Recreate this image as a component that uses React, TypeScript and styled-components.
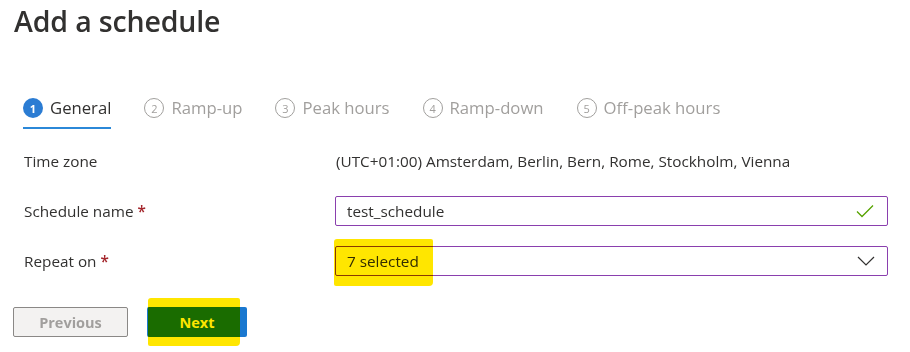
import React from "react";
import styled, { createGlobalStyle, css } from "styled-components";

const Global = createGlobalStyle`
  html, body { margin: 0; padding: 0; background: #ffffff; }
  body { font-family: "Open Sans", "Noto Sans", sans-serif; color: #323130; }
`;

const Page = styled.div`
  width: 910px;
  height: 352px;
  overflow: hidden;
  display: flex;
  flex-direction: column;
`;

const Title = styled.h1`
  margin: 0;
  padding: 0 0 0 14px;
  height: 44px;
  line-height: 42px;
  font-size: 28.5px;
  font-weight: 600;
  color: #323130;
  letter-spacing: -0.15px;
`;

const Tabs = styled.div`
  display: flex;
  align-items: flex-start;
  gap: 33px;
  margin: 50px 0 0 23px;
  height: 36px;
`;

const Tab = styled.div<{ $active?: boolean }>`
  display: flex;
  align-items: center;
  gap: 7px;
  padding: 4px 0 9px;
  border-bottom: 2px solid ${(p) => (p.$active ? "#2b88d8" : "transparent")};
`;

const Step = styled.span<{ $active?: boolean }>`
  width: 20px;
  height: 20px;
  box-sizing: border-box;
  border-radius: 50%;
  display: inline-flex;
  align-items: center;
  justify-content: center;
  font-size: 11px;
  ${(p) =>
    p.$active
      ? css`
          background: #2b7cd3;
          color: #ffffff;
          font-weight: 700;
        `
      : css`
          border: 1px solid #a19f9d;
          color: #a19f9d;
        `}
`;

const TabLabel = styled.span<{ $active?: boolean }>`
  font-size: 16.7px;
  line-height: 20px;
  color: ${(p) => (p.$active ? "#323130" : "#a19f9d")};
`;

const Form = styled.div`
  display: flex;
  flex-direction: column;
  margin-top: 6px;
`;

const Row = styled.div`
  display: grid;
  grid-template-columns: 311px 553px;
  align-items: center;
  height: 50px;
  padding-left: 24px;
`;

const Label = styled.div`
  font-size: 15.3px;
  color: #323130;
`;

const Req = styled.span`
  color: #a4262c;
  font-weight: 600;
`;

const Value = styled.div`
  font-size: 15.3px;
  color: #323130;
  padding-left: 1px;
`;

const Field = styled.div`
  position: relative;
  height: 30px;
  box-sizing: border-box;
  border: 1px solid #8a3fae;
  border-radius: 2px;
  display: flex;
  align-items: center;
  justify-content: space-between;
  padding: 0 12px 0 11px;
  font-size: 15.3px;
  color: #323130;
`;

const Highlight = styled.span<{ $l: number; $t: number; $w: number; $h: number }>`
  position: absolute;
  left: ${(p) => p.$l}px;
  top: ${(p) => p.$t}px;
  width: ${(p) => p.$w}px;
  height: ${(p) => p.$h}px;
  background: #ffe600;
  mix-blend-mode: multiply;
  border-radius: 3px 2px 4px 2px;
  pointer-events: none;
`;

const Footer = styled.div`
  display: flex;
  gap: 19px;
  margin: 21px 0 0 13px;
`;

const Button = styled.button`
  font-family: inherit;
  width: 115px;
  height: 30px;
  box-sizing: border-box;
  border: 1px solid #8a8886;
  border-radius: 2px;
  background: #f3f2f1;
  color: #a19f9d;
  font-size: 14.5px;
  font-weight: 700;
  padding: 0;
`;

const PrimaryWrap = styled.div`
  position: relative;
  width: 100px;
  height: 30px;
`;

const PrimaryButton = styled.button`
  font-family: inherit;
  width: 100px;
  height: 30px;
  border: none;
  border-radius: 2px;
  background: #1a78d0;
  color: #ffffff;
  font-size: 14.5px;
  font-weight: 700;
  padding: 0;
`;

const steps = ["General", "Ramp-up", "Peak hours", "Ramp-down", "Off-peak hours"];

export default function App() {
  return (
    <>
      <Global />
      <Page>
        <Title>Add a schedule</Title>
        <Tabs>
          {steps.map((s, i) => (
            <Tab key={s} $active={i === 0}>
              <Step $active={i === 0}>{i + 1}</Step>
              <TabLabel $active={i === 0}>{s}</TabLabel>
            </Tab>
          ))}
        </Tabs>
        <Form>
          <Row>
            <Label>Time zone</Label>
            <Value>(UTC+01:00) Amsterdam, Berlin, Bern, Rome, Stockholm, Vienna</Value>
          </Row>
          <Row>
            <Label>
              Schedule name <Req>*</Req>
            </Label>
            <Field>
              <span>test_schedule</span>
              <svg width="20" height="16" viewBox="0 0 20 16">
                <path d="M2 8.5 L7 13.5 L18 2.5" fill="none" stroke="#57a300" strokeWidth="1.3" />
              </svg>
            </Field>
          </Row>
          <Row>
            <Label>
              Repeat on <Req>*</Req>
            </Label>
            <Field>
              <span>7 selected</span>
              <svg width="18" height="12" viewBox="0 0 18 12">
                <path d="M1 2 L9 10 L17 2" fill="none" stroke="#323130" strokeWidth="1.2" />
              </svg>
              <Highlight $l={-2} $t={-8} $w={99} $h={47} />
            </Field>
          </Row>
        </Form>
        <Footer>
          <Button>Previous</Button>
          <PrimaryWrap>
            <PrimaryButton>Next</PrimaryButton>
            <Highlight $l={1} $t={-9} $w={92} $h={48} />
          </PrimaryWrap>
        </Footer>
      </Page>
    </>
  );
}
